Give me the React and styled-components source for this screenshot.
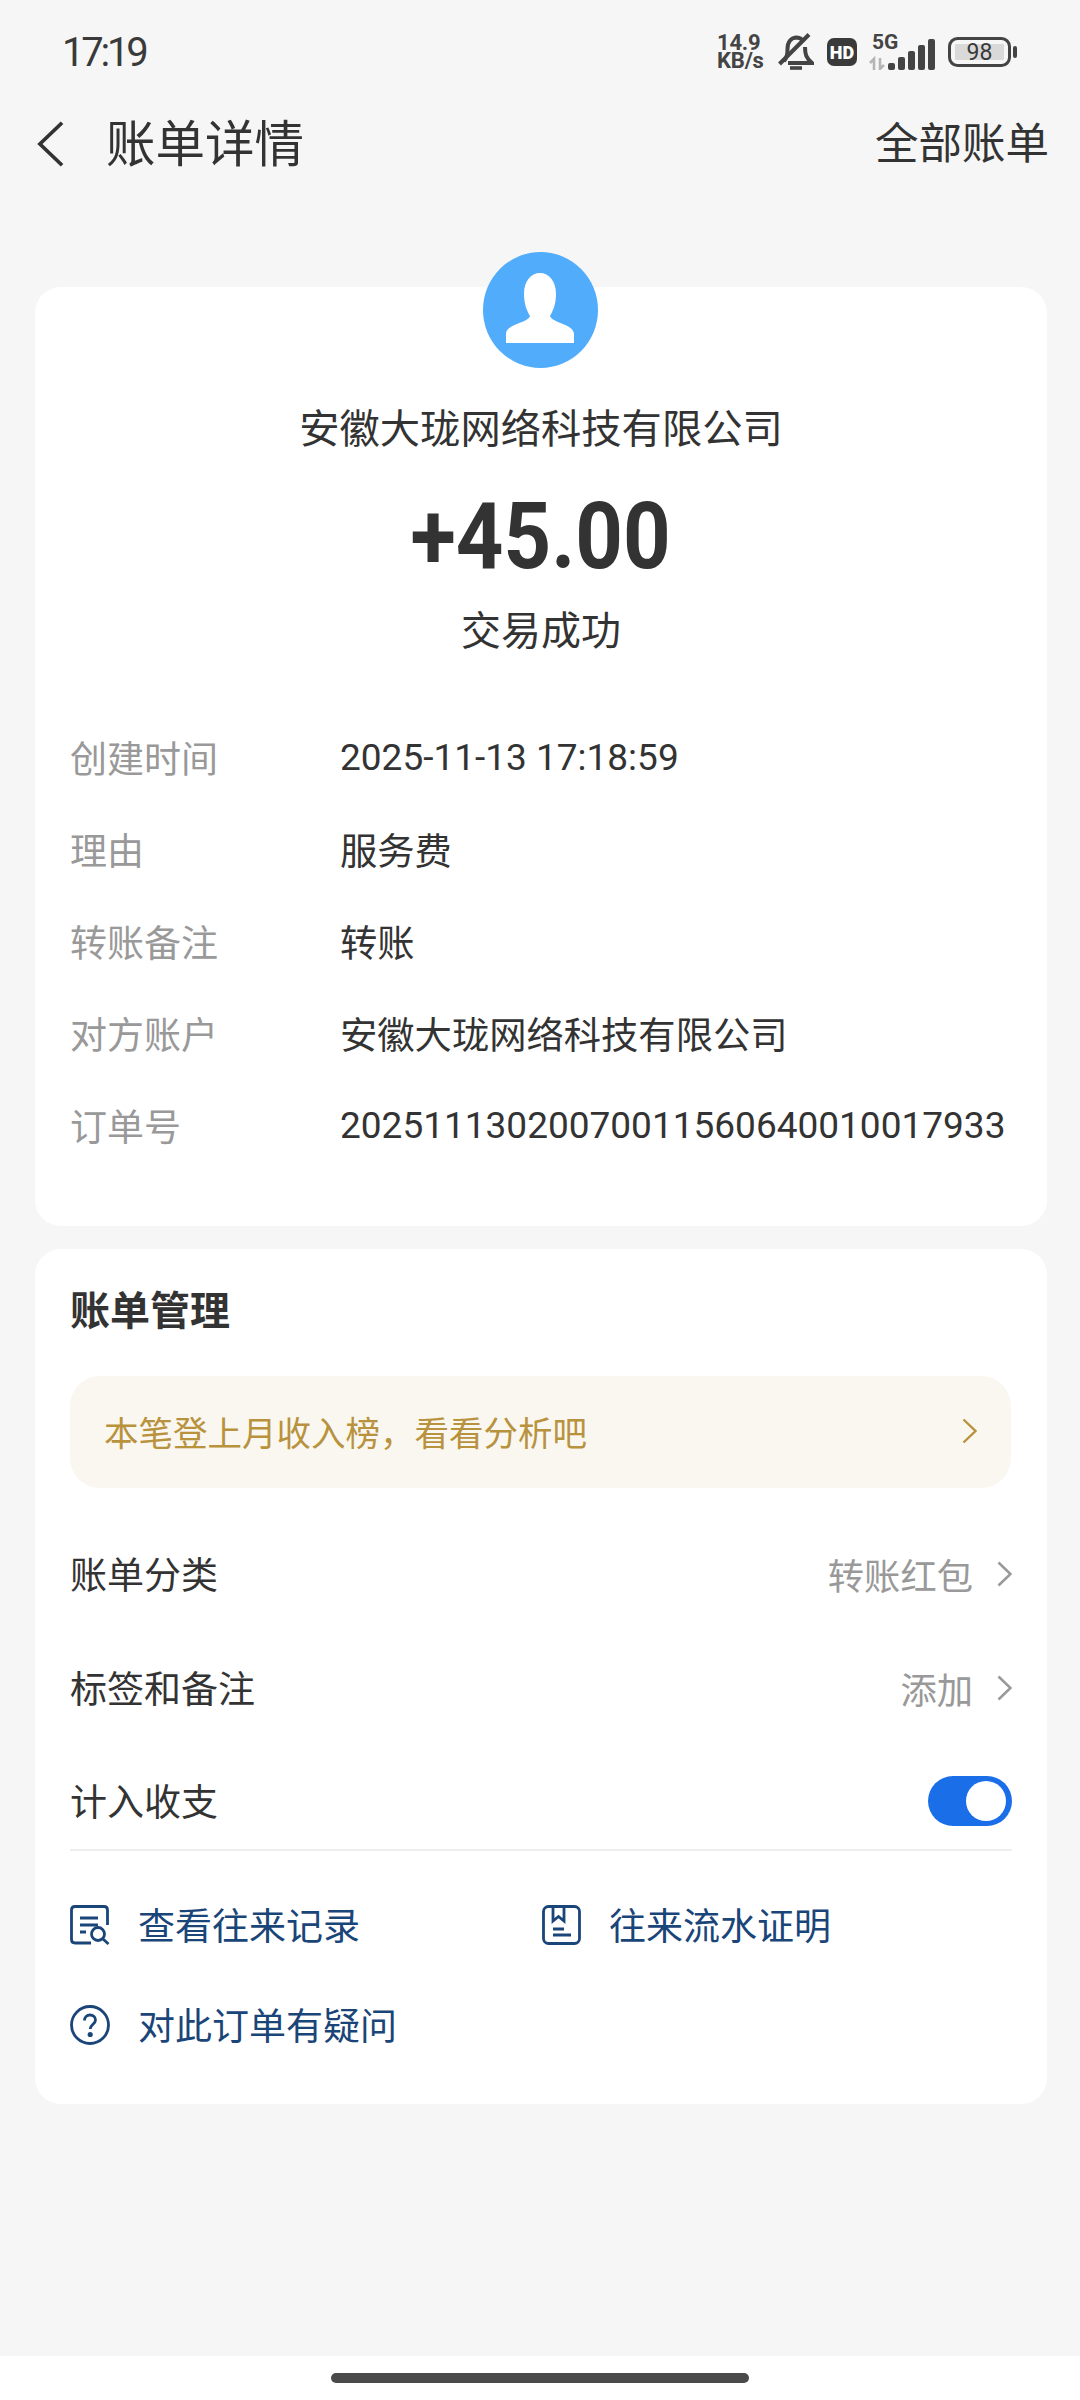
import React from "react";
import styled, { createGlobalStyle } from "styled-components";

const GlobalStyle = createGlobalStyle`
  html, body {
    margin: 0;
    padding: 0;
    background: #f6f6f6;
  }
  body {
    font-family: Roboto, "Noto Sans CJK SC", sans-serif;
    color: #333333;
  }
  * {
    box-sizing: border-box;
  }
`;

const Page = styled.div`
  width: 1080px;
  height: 2400px;
  display: flex;
  flex-direction: column;
  background: #f6f6f6;
`;

const StatusBar = styled.div`
  height: 104px;
  flex: none;
  display: flex;
  align-items: center;
  justify-content: space-between;
  padding: 0 62px;
`;

const Clock = styled.div`
  margin-top: 2px;
  font-size: 40px;
  line-height: 44px;
  letter-spacing: -3.2px;
  color: #3a3a3a;
`;

const StatusIcons = styled.div`
  display: flex;
  align-items: center;
`;

const Speed = styled.div`
  width: 50px;
  font-size: 22px;
  line-height: 18px;
  font-weight: 700;
  letter-spacing: -0.2px;
  color: #444444;
  white-space: nowrap;
`;

const NavBar = styled.div`
  height: 80px;
  flex: none;
  display: flex;
  align-items: center;
  padding: 0 31px 0 36px;
`;

const NavTitle = styled.div`
  margin-left: 40px;
  padding-top: 1px;
  font-size: 49.5px;
  line-height: 60px;
  color: #333333;
  flex: 1;
`;

const NavAction = styled.div`
  padding-top: 2px;
  font-size: 43.5px;
  line-height: 60px;
  color: #333333;
`;

const Card = styled.div`
  margin: ${(p) => p.$top}px 33px 0 35px;
  background: #ffffff;
  border-radius: 26px;
  padding: 0 35px ${(p) => p.$bottom}px;
`;

const Summary = styled.div`
  display: flex;
  flex-direction: column;
  align-items: center;
`;

const Avatar = styled.div`
  width: 115px;
  height: 116px;
  margin-top: -35px;
  margin-left: -2px;
  border-radius: 50%;
  background: #51adfc;
`;

const Payee = styled.div`
  margin-top: 32px;
  font-size: 40.3px;
  line-height: 60px;
  color: #333333;
`;

const Amount = styled.div`
  margin-top: 27px;
  height: 98px;
  font-size: 93px;
  line-height: 100px;
  font-weight: 700;
  transform: scaleX(0.894);
  color: #333333;
`;

const TradeState = styled.div`
  margin-top: 22px;
  font-size: 40px;
  line-height: 50px;
  color: #333333;
`;

const Details = styled.div`
  margin-top: 54px;
`;

const DetailRow = styled.div`
  height: 92px;
  display: flex;
  align-items: center;
`;

const DetailLabel = styled.div`
  width: 270px;
  flex: none;
  font-size: 37px;
  color: #999999;
`;

const DetailValue = styled.div`
  font-size: ${(p) => (p.$numeric ? 37 : 37.3)}px;
  color: #333333;
  white-space: nowrap;
`;

const SectionTitle = styled.div`
  padding-top: 38px;
  font-size: 40px;
  line-height: 50px;
  font-weight: 700;
  color: #333333;
`;

const Banner = styled.div`
  margin-top: 39px;
  height: 112px;
  display: flex;
  align-items: center;
  justify-content: space-between;
  padding: 0 34px 2px;
  border-radius: 30px;
  background: #faf7f1;
  margin-right: 1px;
  font-size: 34.5px;
  color: #b8923c;
`;

const ManageList = styled.div`
  margin-top: 29px;
  border-bottom: 2px solid #eeeeee;
`;

const ManageRow = styled.div`
  height: ${(p) => p.$height}px;
  margin-top: ${(p) => p.$gap || 0}px;
  display: flex;
  align-items: center;
  justify-content: space-between;
`;

const ManageLabel = styled.div`
  font-size: 37px;
  padding-bottom: 3px;
  color: #333333;
`;

const ManageValue = styled.div`
  display: flex;
  align-items: center;
  gap: 24px;
  font-size: 36.3px;
  color: #999999;
`;

const Toggle = styled.div`
  position: relative;
  width: 84px;
  height: 50px;
  border-radius: 25px;
  background: #1a6fe8;
`;

const ToggleKnob = styled.div`
  position: absolute;
  top: 5px;
  right: 6px;
  width: 40px;
  height: 40px;
  border-radius: 50%;
  background: #ffffff;
`;

const Links = styled.div`
  display: grid;
  grid-template-columns: 472px 1fr;
  grid-auto-rows: 100px;
  padding-top: 24px;
`;

const LinkItem = styled.div`
  display: flex;
  align-items: center;
  gap: 28px;
  font-size: 37px;
  color: #1a4578;
`;

const LinkText = styled.span`
  padding-bottom: 3px;
`;

const Spacer = styled.div`
  flex: 1;
`;

const HomeArea = styled.div`
  height: 44px;
  flex: none;
  display: flex;
  justify-content: center;
  padding-top: 17px;
  background: #ffffff;
`;

const HomeBar = styled.div`
  width: 418px;
  height: 10px;
  border-radius: 5px;
  background: #4a4a4a;
`;

const Chevron = ({ w = 15, h = 26, color = "#999999", sw = 2.6, flip }) => (
  <svg width={w} height={h} viewBox="0 0 15 26" fill="none">
    <path d={flip ? "M13.5 1.5 L1.5 13 L13.5 24.5" : "M1.5 1.5 L13.5 13 L1.5 24.5"} stroke={color} strokeWidth={sw} />
  </svg>
);

const BellOff = () => (
  <svg width="36" height="38" viewBox="0 0 36 38" fill="none" style={{ marginLeft: 11 }}>
    <path
      d="M6 28 C9 25 9.5 21 9.5 16 C9.5 9 13 5 18 4.5 C21 4.5 24 6 25.5 8.5 M27 14 C27 21 28 25 34 30 L10 30"
      stroke="#444444"
      strokeWidth="4"
    />
    <path d="M1.5 31 L31 1.5" stroke="#444444" strokeWidth="4" />
    <path d="M12 35 H24" stroke="#444444" strokeWidth="3.6" />
  </svg>
);

const HdBadge = () => (
  <svg width="30" height="28" viewBox="0 0 30 28" style={{ marginLeft: 13 }}>
    <rect width="30" height="28" rx="7" fill="#3a3a3a" />
    <text x="15" y="20.5" textAnchor="middle" fontFamily="Roboto" fontWeight="900" fontSize="18" fill="#ffffff">
      HD
    </text>
  </svg>
);

const Signal = () => (
  <svg width="70" height="42" viewBox="0 0 70 42" style={{ marginLeft: 12, marginTop: -6 }}>
    <text x="3" y="21" fontFamily="Roboto" fontWeight="700" fontSize="21" fill="#444444">
      5G
    </text>
    <path d="M5 42 V31 L1 35 M11 30 V41 L15 37" stroke="#b5b5b5" strokeWidth="2.6" fill="none" />
    <rect x="19" y="35" width="7" height="7" rx="2" fill="#444444" />
    <rect x="29" y="29" width="7" height="13" rx="2" fill="#444444" />
    <rect x="39" y="23" width="7" height="19" rx="2" fill="#444444" />
    <rect x="49" y="17" width="7" height="25" rx="2" fill="#444444" />
    <rect x="59" y="11" width="7" height="31" rx="2" fill="#444444" />
  </svg>
);

const Battery = () => (
  <svg width="70" height="30" viewBox="0 0 70 30" style={{ marginLeft: 9 }}>
    <rect x="1.5" y="1.5" width="60" height="27" rx="8" fill="none" stroke="#444444" strokeWidth="3" />
    <rect x="7" y="7" width="49" height="16" rx="1" fill="#d9d9d9" />
    <rect x="65" y="9" width="4" height="12" rx="2" fill="#444444" />
    <text x="31.5" y="23" textAnchor="middle" fontFamily="Roboto" fontSize="23" fill="#3a3a3a">
      98
    </text>
  </svg>
);

const RecordIcon = () => (
  <svg width="40" height="40" viewBox="0 0 40 40" fill="none" stroke="#1a4578" strokeWidth="2.8">
    <path d="M21 38 H5 C2.8 38 1.5 36.7 1.5 34.5 V5 C1.5 2.8 2.8 1.5 5 1.5 H34 C36.2 1.5 37.5 2.8 37.5 5 V20" />
    <path d="M10 13 H28 M10 20 H28 M10 27 H16" />
    <circle cx="28" cy="29" r="6.5" />
    <path d="M33 34 L38.5 39" />
  </svg>
);

const ProofIcon = () => (
  <svg width="39" height="40" viewBox="0 0 39 40" fill="none" stroke="#1a4578" strokeWidth="2.8">
    <rect x="1.5" y="1.5" width="36" height="37" rx="5" />
    <path d="M11 2 V16 L16.5 11.5 L22 16 V2" />
    <path d="M11 24 H22 M11 30 H29" />
  </svg>
);

const QuestionIcon = () => (
  <svg width="40" height="40" viewBox="0 0 40 40" fill="none" stroke="#1a4578" strokeWidth="2.8">
    <circle cx="20" cy="20" r="18.5" />
    <path d="M14.5 15.5 C14.5 12 17 10 20 10 C23 10 25.5 12 25.5 15 C25.5 19 20.2 19.5 20.2 24" />
    <circle cx="20.2" cy="29.5" r="1.2" fill="#1a4578" />
  </svg>
);

const details = [
  { label: "创建时间", value: "2025-11-13 17:18:59", numeric: true },
  { label: "理由", value: "服务费" },
  { label: "转账备注", value: "转账" },
  { label: "对方账户", value: "安徽大珑网络科技有限公司" },
  { label: "订单号", value: "20251113020070011560640010017933", numeric: true },
];

export default function App() {
  return (
    <Page>
      <GlobalStyle />
      <StatusBar>
        <Clock>17:19</Clock>
        <StatusIcons>
          <Speed>
            14.9
            <br />
            KB/s
          </Speed>
          <BellOff />
          <HdBadge />
          <Signal />
          <Battery />
        </StatusIcons>
      </StatusBar>

      <NavBar>
        <Chevron w={30} h={48} color="#333333" sw={2} flip />
        <NavTitle>账单详情</NavTitle>
        <NavAction>全部账单</NavAction>
      </NavBar>

      <Card $top={103} $bottom={55}>
        <Summary>
          <Avatar>
            <svg width="115" height="116" viewBox="0 0 115 116">
              <path
                d="M57 21 C66 21 73 29 73 42 C73 52 70 59 67 64 C69 71 91 72 91 82 V91 H23 V82 C23 72 45 71 47 64 C44 59 41 52 41 42 C41 29 48 21 57 21 Z"
                fill="#ffffff"
              />
            </svg>
          </Avatar>
          <Payee>安徽大珑网络科技有限公司</Payee>
          <Amount>+45.00</Amount>
          <TradeState>交易成功</TradeState>
        </Summary>
        <Details>
          {details.map((d) => (
            <DetailRow key={d.label}>
              <DetailLabel>{d.label}</DetailLabel>
              <DetailValue $numeric={d.numeric}>{d.value}</DetailValue>
            </DetailRow>
          ))}
        </Details>
      </Card>

      <Card $top={23} $bottom={29}>
        <SectionTitle>账单管理</SectionTitle>
        <Banner>
          本笔登上月收入榜，看看分析吧
          <Chevron w={15} h={26} color="#b8923c" sw={2.4} />
        </Banner>
        <ManageList>
          <ManageRow $height={114}>
            <ManageLabel>账单分类</ManageLabel>
            <ManageValue>
              转账红包
              <Chevron />
            </ManageValue>
          </ManageRow>
          <ManageRow $height={114}>
            <ManageLabel>标签和备注</ManageLabel>
            <ManageValue>
              添加
              <Chevron />
            </ManageValue>
          </ManageRow>
          <ManageRow $height={96} $gap={8}>
            <ManageLabel>计入收支</ManageLabel>
            <Toggle>
              <ToggleKnob />
            </Toggle>
          </ManageRow>
        </ManageList>
        <Links>
          <LinkItem>
            <RecordIcon />
            <LinkText>查看往来记录</LinkText>
          </LinkItem>
          <LinkItem>
            <ProofIcon />
            <LinkText>往来流水证明</LinkText>
          </LinkItem>
          <LinkItem>
            <QuestionIcon />
            <LinkText>对此订单有疑问</LinkText>
          </LinkItem>
        </Links>
      </Card>

      <Spacer />
      <HomeArea>
        <HomeBar />
      </HomeArea>
    </Page>
  );
}
